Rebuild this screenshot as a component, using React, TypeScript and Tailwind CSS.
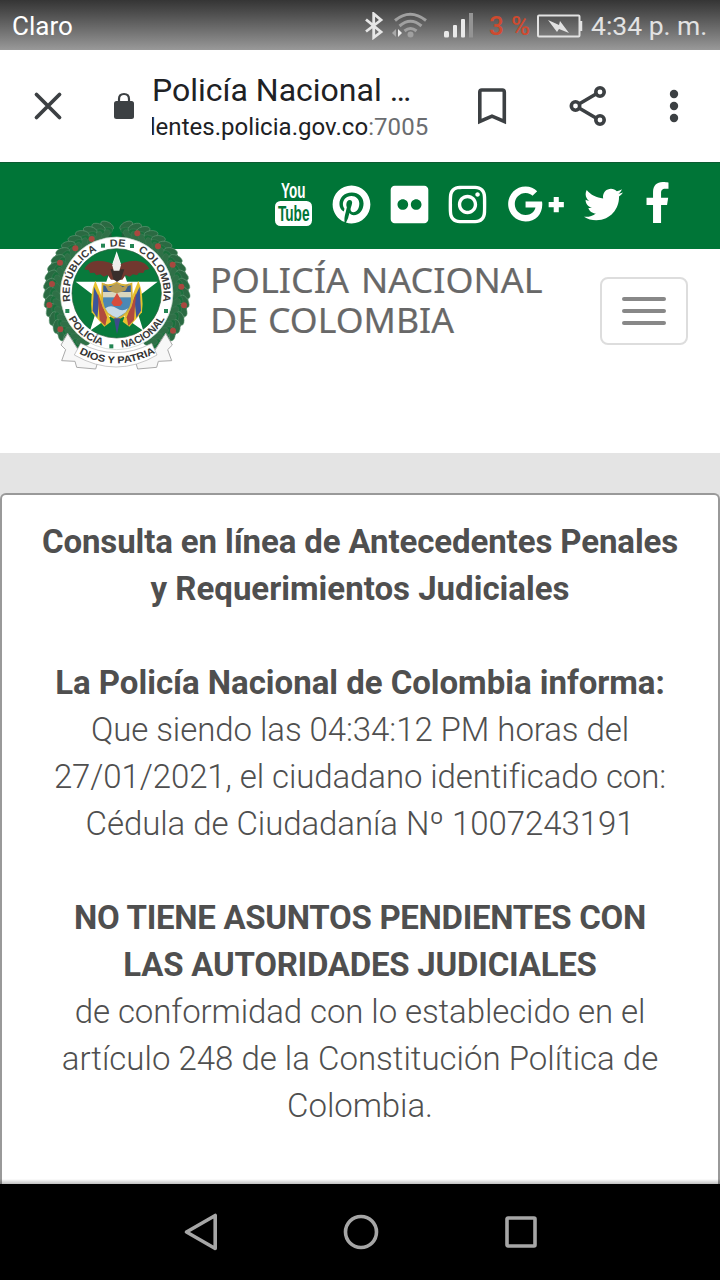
import React from "react";
import {
  FaPinterest,
  FaFlickr,
  FaInstagram,
  FaGooglePlusG,
  FaTwitter,
  FaFacebookF,
} from "react-icons/fa";

const CX = 260;
const CY = 250;

/** Point on a circle round the emblem's centre; degrees run clockwise from the top. */
function polar(r: number, deg: number): [number, number] {
  const a = (deg * Math.PI) / 180;
  return [CX + r * Math.sin(a), CY - r * Math.cos(a)];
}

function arc(r: number, from: number, to: number) {
  const [x1, y1] = polar(r, from);
  const [x2, y2] = polar(r, to);
  return `M${x1.toFixed(1)} ${y1.toFixed(1)}A${r} ${r} 0 0 ${to > from ? 1 : 0} ${x2.toFixed(1)} ${y2.toFixed(1)}`;
}

function ArcWord({ id, r, from, to, children }: { id: string; r: number; from: number; to: number; children: string }) {
  const length = (Math.abs(to - from) * Math.PI * r) / 180;
  return (
    <>
      <path id={id} d={arc(r, from, to)} fill="none" />
      <text fontSize="31" fontWeight="700" fill="#3a3a3a" fontFamily="Liberation Sans, sans-serif">
        <textPath href={`#${id}`} textLength={length - 2} lengthAdjust="spacingAndGlyphs">
          {children}
        </textPath>
      </text>
    </>
  );
}

function Leaves() {
  const items: React.ReactNode[] = [];
  [-1, 1].forEach((side) => {
    for (let i = 0; i < 19; i++) {
      const deg = side * (8 + i * 7.4);
      [
        { r: 205, t: -36, c: "#2a6a42" },
        { r: 190, t: 0, c: "#1a6f3c" },
        { r: 178, t: 36, c: "#2f7047" },
      ].forEach((l, k) => {
        const [x, y] = polar(l.r, deg + side * k * 2);
        items.push(
          <ellipse
            key={`${side}-${i}-${k}`}
            cx={x}
            cy={y}
            rx="21"
            ry="11"
            fill={l.c}
            stroke={k === 0 ? "#6fa281" : "#3f7d56"}
            strokeWidth="1.5"
            transform={`rotate(${deg + side * l.t} ${x} ${y})`}
          />,
        );
      });
    }
  });
  const berries: [number, number][] = [
    [136, 115], [185, 87], [90, 158], [66, 222], [58, 285], [91, 358],
    [322, 70], [384, 109], [428, 164], [454, 230], [462, 286], [429, 362],
  ];
  return (
    <g>
      <path d={arc(193, 5, 140)} fill="none" stroke="#215f3a" strokeWidth="46" />
      <path d={arc(193, -5, -140)} fill="none" stroke="#215f3a" strokeWidth="46" />
      {items}
      {berries.map(([x, y]) => (
        <circle key={`${x}-${y}`} cx={x} cy={y} r="9" fill="#a8483f" />
      ))}
    </g>
  );
}

function Emblem() {
  return (
    <svg className="block h-[170px] w-[170px]" viewBox="0 0 510 510">
      <Leaves />
      <circle cx={CX} cy={CY} r="169" fill="#fff" stroke="#c5d2c8" strokeWidth="2" />
      <circle cx={CX} cy={CY} r="134" fill="#087a3c" stroke="#2b5c3d" strokeWidth="2" />
      <ArcWord id="w-republica" r={141} from={-100} to={-24}>REPÚBLICA</ArcWord>
      <ArcWord id="w-de" r={141} from={-8} to={11}>DE</ArcWord>
      <ArcWord id="w-colombia" r={141} from={27} to={101}>COLOMBIA</ArcWord>
      <ArcWord id="w-policia" r={163} from={242} to={195}>POLICÍA</ArcWord>
      <ArcWord id="w-nacional" r={163} from={175} to={117}>NACIONAL</ArcWord>
      {[[219, 107], [306, 108], [112, 303], [244, 409], [408, 303]].map(([x, y]) => (
        <rect key={x} x={x - 6} y={y - 6} width="12" height="12" fill="#238553" />
      ))}

      <path d="M260 124l31 91h92l-72 55 29 92-80-56-80 56 29-92-72-55h92z" fill="#fff" />
      {/* flags */}
      <path d="M196 212q-17 40-11 95l38 43 20-15-26-70z" fill="#e8c32e" />
      <path d="M192 230l-4 72 14 22 6-60z" fill="#3c559a" />
      <path d="M203 250l6 80 17 18 5-26z" fill="#b14a3d" />
      <path d="M325 212q17 40 11 95l-38 43-20-15 26-70z" fill="#e8c32e" />
      <path d="M329 230l4 72-14 22-6-60z" fill="#3c559a" />
      <path d="M318 250l-6 80-17 18-5-26z" fill="#b14a3d" />
      {/* shield */}
      <path d="M218 222q18 9 42-3 24 12 44 3l2 52q-5 36-45 54-40-18-45-54z" fill="#4b88b5" stroke="#d8b236" strokeWidth="6" />
      <path d="M220 226q19 7 40-3 22 10 42 3v20h-82z" fill="#3a5f92" />
      <path d="M219 246h84v16h-84z" fill="#d9d6bd" />
      <path d="M244 278l17-30 17 30-7 10h-20z" fill="#d64d3d" />
      <path d="M226 295q17-12 34 0t34 0l-7 12q-12 9-26 16-15-5-27-15z" fill="#c9dbe6" />
      <path d="M222 220l20 12 18-14 18 14 20-12-12 22-26 8-26-8z" fill="#b59a55" />
      <path d="M252 325l9 48 10-48z" fill="#3f4a8c" />
      {/* condor */}
      <path d="M260 172q-16-20-57-20-30 2-40 26l14 3 3 8 13-1 6 8 12-3 10 7 12-5 10 14h34l10-14 12 5 10-7 12 3 6-8 13 1 4-8 14-4q-10-22-40-25-42 0-58 20z" fill="#71382f" />
      <path d="M242 178l8 30 11 8 12-8 10-30z" fill="#392e2c" />
      <path d="M247 166l13-34 13 34-5 16h-17z" fill="#f0eeeb" />

      {/* ribbon */}
      <path d="M113 370l-20 35 14 14-12 33 40 2 5 18 57 5 8-27-60-30z" fill="#f7f7f7" stroke="#aaa" strokeWidth="3" />
      <path d="M407 370l20 35-14 14 12 33-40 2-5 18-57 5-8-27 60-30z" fill="#f7f7f7" stroke="#aaa" strokeWidth="3" />
      <path d="M152 400q105 56 213 0l16 35q-122 72-248 0z" fill="#fff" stroke="#aaa" strokeWidth="2" />
      <path id="w-motto" d="M147 430Q260 491 375 429" fill="none" />
      <text fontSize="30" fontWeight="700" fill="#333" fontFamily="Liberation Sans, sans-serif">
        <textPath href="#w-motto" textLength="240" lengthAdjust="spacingAndGlyphs">DIOS Y PATRIA</textPath>
      </text>
    </svg>
  );
}

function StatusBar() {
  return (
    <div className="flex h-[50px] shrink-0 items-center bg-linear-to-b from-[#353535] to-[#999999] pl-3 pt-[2px] text-[26px] text-[#e2e2e2]">
      <span className="w-[352px] text-white">Claro</span>
      <svg className="h-[28px] w-[20px] shrink-0" viewBox="0 0 20 28" fill="none" stroke="#e6e6e6" strokeWidth="2.800">
        <path d="M2 7.500l15 12.500-7.300 5.500V1.800L17 8 2 19.500" />
      </svg>
      <svg className="ml-[8px] h-[28px] w-[38px] shrink-0" viewBox="0 0 38 28" fill="none" stroke="#a0a0a0" strokeWidth="3">
        <path d="M3 8.500q15-12.500 31 0M7.500 14q11-9.500 22 0M12.500 19q6-5 12 0" />
        <circle cx="18.500" cy="22.500" r="3" fill="#a0a0a0" stroke="none" />
        <path d="M4 17v8l-4-4z" fill="#a8a8a8" stroke="none" />
        <path d="M6 17v8l4-4z" fill="#eee" stroke="none" />
      </svg>
      <svg className="ml-[13px] h-[28px] w-[31px] shrink-0" viewBox="0 0 31 28" fill="#eaeaea">
        <rect x="1" y="19" width="5" height="6.500" rx="1.500" />
        <rect x="10" y="13" width="4" height="12.500" rx="1" />
        <rect x="18" y="7" width="4" height="18.500" rx="1" />
        <rect x="26" y="1" width="4" height="24.500" fill="#949494" />
      </svg>
      <span className="ml-[15px] w-[48px] text-[26px] font-medium tracking-[0.4px] whitespace-nowrap text-[#cf4a2f]">3 %</span>
      <svg className="h-[26px] w-[46px] shrink-0" viewBox="0 0 46 26" fill="none" stroke="#e2e2e2" strokeWidth="2">
        <rect x="1" y="2.500" width="41.500" height="21" rx="1" />
        <path d="M44 8v10" strokeWidth="2.500" />
        <path d="M11 7l11 5 1-4 9 12-10-4-2 3z" fill="#e2e2e2" stroke="none" />
      </svg>
      <span className="ml-[8px] text-[26.5px] whitespace-nowrap">4:34 p. m.</span>
    </div>
  );
}

function BrowserBar() {
  return (
    <div className="flex h-[112px] shrink-0 items-center bg-white">
      <svg className="ml-[33px] h-[30px] w-[30px] shrink-0" viewBox="0 0 30 30" stroke="#3c4043" strokeWidth="3.800" strokeLinecap="round">
        <path d="M3.500 3.500l23 23M26.500 3.500l-23 23" />
      </svg>
      <svg className="ml-[50px] h-[28px] w-[22px] shrink-0" viewBox="0 0 22 28">
        <path d="M6 10V7q0-5 5-5t5 5v3" fill="none" stroke="#3c4043" strokeWidth="2.200" />
        <rect x="1" y="9" width="20" height="18" rx="2.500" fill="#3c4043" />
      </svg>
      <div className="ml-[17px] w-[290px] overflow-hidden pt-[5px] whitespace-nowrap text-[#202124]">
        <div className="text-[32px] leading-[38px]">Policía Nacional …</div>
        <div className="h-[37px] w-[280px] overflow-hidden text-[24px] leading-[37px]">
          <span className="-ml-[10px] tracking-[0.04px]">dentes.policia.gov.co<span className="text-[#6b6d70]">:7005</span></span>
        </div>
      </div>
      <svg className="ml-[35px] h-[38px] w-[30px] shrink-0" viewBox="0 0 30 38" fill="none" stroke="#3c4043" strokeWidth="3.600">
        <path d="M2.800 34.500V5q0-2 2-2h20.500q2 0 2 2v29.500L15 29.200z" />
      </svg>
      <svg className="ml-[62px] h-[42px] w-[38px] shrink-0" viewBox="0 0 38 42" fill="none" stroke="#3c4043" strokeWidth="3.600">
        <path d="M10 19l17-10M10 23l17 10" />
        <circle cx="6.500" cy="21" r="4.200" />
        <circle cx="31" cy="7" r="4.200" />
        <circle cx="31" cy="35" r="4.200" />
      </svg>
      <svg className="ml-[62px] h-[34px] w-[10px] shrink-0" viewBox="0 0 10 34" fill="#3c4043">
        <circle cx="5" cy="5" r="4.200" />
        <circle cx="5" cy="17" r="4.200" />
        <circle cx="5" cy="29" r="4.200" />
      </svg>
    </div>
  );
}

function YouTubeMark() {
  return (
    <svg className="h-[46px] w-[38px] shrink-0" viewBox="0 0 38 46" fontFamily="Liberation Sans, sans-serif" fontWeight="700">
      <text x="6" y="17" fontSize="22" fill="#fff" textLength="24.500" lengthAdjust="spacingAndGlyphs">You</text>
      <rect x="0" y="20" width="37" height="25" rx="5.500" fill="#fff" />
      <text x="3" y="39.800" fontSize="21.500" fill="#007537" textLength="31.500" lengthAdjust="spacingAndGlyphs">Tube</text>
    </svg>
  );
}

function SocialBar() {
  return (
    <div className="flex h-[87px] shrink-0 items-start border-t border-[#0b5b32] bg-[#007537] pt-[17px] pl-[275px] text-white">
      <div className="flex h-[48px] items-center">
        <YouTubeMark />
        <div className="ml-[19.500px] flex w-[38px] justify-center"><FaPinterest className="size-[39px] shrink-0" /></div>
        <div className="ml-[20px] flex w-[38px] justify-center"><FaFlickr className="size-[43px] shrink-0" /></div>
        <div className="ml-[20px] flex w-[38px] justify-center"><FaInstagram className="size-[43px] shrink-0" /></div>
        <div className="ml-[20px] flex w-[58px] justify-center"><FaGooglePlusG className="size-[58px] shrink-0" /></div>
        <div className="ml-[20px] flex w-[38px] justify-center"><FaTwitter className="size-[39px] shrink-0" /></div>
        <div className="ml-[24px] flex w-[22px] justify-center"><FaFacebookF className="mb-1 size-[41px] shrink-0" /></div>
      </div>
    </div>
  );
}

function SiteHeader() {
  return (
    <div className="flex h-[204px] shrink-0 items-start bg-white">
      <div className="relative -mt-[39px] ml-[30px]"><Emblem /></div>
      <svg
        className="mt-[6px] ml-[10px] h-[90px] w-[340px]"
        viewBox="0 0 340 90"
        fontFamily="Noto Sans, sans-serif"
        fontSize="35"
        fill="#686868"
        stroke="#686868"
        strokeWidth="0.200"
      >
        <text y="37.500">
          <tspan x="0" textLength="139" lengthAdjust="spacingAndGlyphs">POLICÍA</tspan>{" "}
          <tspan x="151" textLength="181.500" lengthAdjust="spacingAndGlyphs">NACIONAL</tspan>
        </text>
        <text y="77.500">
          <tspan x="0" textLength="48" lengthAdjust="spacingAndGlyphs">DE</tspan>{" "}
          <tspan x="58" textLength="186" lengthAdjust="spacingAndGlyphs">COLOMBIA</tspan>
        </text>
      </svg>
      <button className="mt-[28px] ml-[50px] flex h-[68px] w-[88px] flex-col items-center justify-center gap-2 rounded-lg border-2 border-[#dddddd]">
        <span className="h-1 w-[44px] rounded-sm bg-[#888888]" />
        <span className="h-1 w-[44px] rounded-sm bg-[#888888]" />
        <span className="h-1 w-[44px] rounded-sm bg-[#888888]" />
      </button>
    </div>
  );
}

function Result() {
  return (
    <div className="flex-1 overflow-hidden bg-[#e4e4e4] pt-[40px]">
      <div className="h-full rounded-t-[6px] border-2 border-b-0 border-[#999999] bg-white pt-[23px] text-center text-[33px] leading-[47px] font-light tracking-[-0.07px] whitespace-nowrap text-[#4f4f4f]">
        <p className="font-bold">
          <span className="tracking-[-0.11px]">Consulta en línea de Antecedentes Penales</span>
          <br />
          <span className="tracking-[0]">y Requerimientos Judiciales</span>
        </p>
        <p className="mt-[47px]">
          <b className="font-bold tracking-[-0.03px]">La Policía Nacional de Colombia informa:</b>
          <br />Que siendo las 04:34:12 PM horas del
          <br />
          <span className="tracking-[-0.1px]">27/01/2021, el ciudadano identificado con:</span>
          <br />Cédula de Ciudadanía Nº 1007243191
        </p>
        <p className="mt-[47px]">
          <b className="font-bold">
            <span className="tracking-[-0.3px]">NO TIENE ASUNTOS PENDIENTES CON</span>
            <br />
            <span className="tracking-[-0.24px]">LAS AUTORIDADES JUDICIALES</span>
          </b>
          <br />
          <span className="tracking-[-0.1px]">de conformidad con lo establecido en el</span>
          <br />
          <span className="tracking-[0]">artículo 248 de la Constitución Política de</span>
          <br />Colombia.
        </p>
      </div>
    </div>
  );
}

function NavBar() {
  return (
    <div className="flex h-24 shrink-0 items-center bg-black pl-[183px]">
      <svg className="h-[40px] w-[36px]" viewBox="0 0 36 40" fill="none" stroke="#a6a6a6" strokeWidth="3.600" strokeLinejoin="round">
        <path d="M32.200 3.500v33L3.500 20z" />
      </svg>
      <svg className="ml-[124px] h-[36px] w-[36px]" viewBox="0 0 36 36" fill="none" stroke="#a6a6a6" strokeWidth="3.600">
        <circle cx="18" cy="18" r="15.500" />
      </svg>
      <svg className="ml-[124px] h-[36px] w-[36px]" viewBox="0 0 36 36" fill="none" stroke="#a6a6a6" strokeWidth="3.600">
        <rect x="4" y="4" width="28" height="28" rx="1" />
      </svg>
    </div>
  );
}

export default function App() {
  return (
    <div className="flex h-[1280px] w-[720px] flex-col overflow-hidden bg-white font-[Roboto,sans-serif]">
      <StatusBar />
      <BrowserBar />
      <SocialBar />
      <SiteHeader />
      <Result />
      <div className="relative -mt-[5px] h-[5px] shrink-0 bg-linear-to-b from-transparent to-black/25" />
      <NavBar />
    </div>
  );
}
